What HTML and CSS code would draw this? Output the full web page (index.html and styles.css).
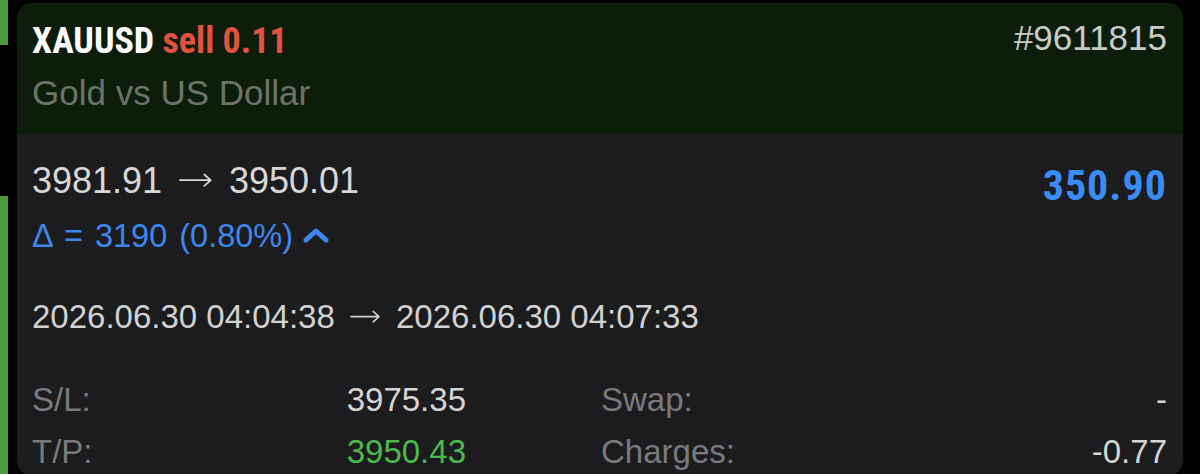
FILE: index.html
```html
<!DOCTYPE html>
<html>
<head>
<meta charset="utf-8">
<link rel="stylesheet" href="styles.css">
</head>
<body>
<div class="page">
  <div class="rail">
    <div class="rail-top"></div>
    <div class="rail-gap"></div>
    <div class="rail-bottom"></div>
  </div>
  <div class="card">
    <div class="head">
      <div class="head-left">
        <div class="title"><span class="sym">XAUUSD</span> <span class="side">sell 0.11</span></div>
        <div class="desc">Gold vs US Dollar</div>
      </div>
      <div class="ticket">#9611815</div>
    </div>
    <div class="body">
      <div class="prices">
        <div class="prices-left">
          <div class="rate">3981.91 <svg class="arrow" viewBox="0 0 34 14" preserveAspectRatio="none"><path d="M1 7H32.5M26 1.5L32.5 7L26 12.5" fill="none" stroke="currentColor" stroke-width="1.8" stroke-linecap="round" stroke-linejoin="round"/></svg> 3950.01</div>
          <div class="delta">Δ = 3190 (0.80%)
            <svg class="chev" width="26" height="16" viewBox="0 0 26 16"><polyline points="3,13 13,4 23,13" fill="none" stroke="#3d87ef" stroke-width="5" stroke-linecap="round" stroke-linejoin="round"/></svg>
          </div>
        </div>
        <div class="profit">350.90</div>
      </div>
      <div class="time">2026.06.30 04:04:38 <svg class="arrow" viewBox="0 0 34 14" preserveAspectRatio="none"><path d="M1 7H32.5M26 1.5L32.5 7L26 12.5" fill="none" stroke="currentColor" stroke-width="1.8" stroke-linecap="round" stroke-linejoin="round"/></svg> 2026.06.30 04:07:33</div>
      <div class="stats">
        <div class="stat"><span class="lbl">S/L:</span><span class="val">3975.35</span></div>
        <div class="stat"><span class="lbl">Swap:</span><span class="val">-</span></div>
        <div class="stat"><span class="lbl">T/P:</span><span class="val tp">3950.43</span></div>
        <div class="stat"><span class="lbl">Charges:</span><span class="val">-0.77</span></div>
      </div>
    </div>
  </div>
</div>
</body>
</html>
```

FILE: styles.css
```css
html, body {
  margin: 0;
  padding: 0;
  background: #000;
  height: 474px;
  overflow: hidden;
  font-family: "Liberation Sans", Arial, sans-serif;
}
.page {
  display: flex;
  height: 474px;
}
.rail {
  width: 8px;
  display: flex;
  flex-direction: column;
  margin-right: 9px;
}
.rail-top {
  height: 45px;
  background: #4b9a3d;
}
.rail-gap {
  height: 151px;
}
.rail-bottom {
  flex: 1;
  background: #4b9a3d;
}
.card {
  width: 1166px;
  height: 473px;
  margin-top: 3px;
  border-radius: 15px;
  overflow: hidden;
  background: #1c1c1e;
  flex-shrink: 0;
}
.head {
  background: #0c1d0a;
  height: 131px;
  box-sizing: border-box;
  padding: 18px 16px 0 15px;
  display: flex;
  justify-content: space-between;
  align-items: flex-start;
}
.title {
  font-family: "Liberation Sans Narrow", "Roboto Condensed", "Liberation Sans", sans-serif;
  font-size: 36px;
  line-height: 40px;
  font-weight: bold;
  white-space: nowrap;
}
.sym {
  color: #fdfdfd;
}
.side {
  color: #e2523f;
}
.desc {
  margin-top: 12px;
  font-size: 35px;
  line-height: 40px;
  color: #6d736b;
}
.ticket {
  margin-top: -3px;
  font-size: 35px;
  line-height: 40px;
  color: #c9cbc7;
}
.body {
  padding: 27px 16px 0 15px;
}
.prices {
  display: flex;
  justify-content: space-between;
  align-items: flex-start;
}
.rate {
  font-size: 36px;
  line-height: 40px;
  color: #d7d7d7;
  white-space: nowrap;
}
.arrow {
  width: 0.92em;
  height: 0.4em;
  vertical-align: 0.16em;
  margin: 0 0.19em;
}
.delta {
  margin-top: 17px;
  font-size: 32.5px;
  line-height: 36px;
  word-spacing: 3px;
  color: #3d87ef;
  display: flex;
  align-items: center;
  gap: 10px;
  white-space: nowrap;
}
.chev {
  display: block;
  margin-top: -2px;
}
.profit {
  margin-top: 2px;
  font-family: "Liberation Sans Narrow", "Roboto Condensed", "Liberation Sans", sans-serif;
  font-size: 42px;
  line-height: 46px;
  font-weight: bold;
  color: #3b8cf2;
  letter-spacing: 1px;
}
.time {
  margin-top: 44px;
  font-size: 33px;
  line-height: 38px;
  color: #d2d2d2;
  white-space: nowrap;
}
.stats {
  margin-top: 38px;
  display: grid;
  grid-template-columns: 434px 566px;
  column-gap: 135px;
}
.stat {
  display: flex;
  justify-content: space-between;
  font-size: 33px;
  line-height: 52px;
}
.lbl {
  color: #7a7a7d;
}
.val {
  color: #d4d4d4;
}
.val.tp {
  color: #4db84b;
}
```
